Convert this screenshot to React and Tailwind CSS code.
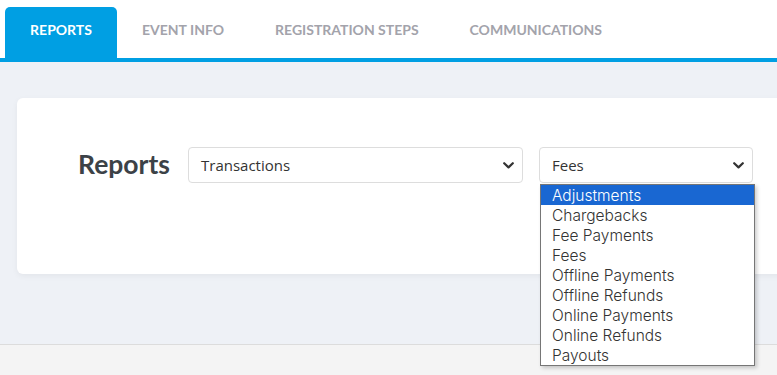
import React from "react";

const Chevron = ({ className = "" }) => (
  <svg className={className} width="11" height="7" viewBox="0 0 11 7" fill="none">
    <path d="M1.2 1.2 L5.5 5.4 L9.8 1.2" stroke="#333" strokeWidth="2.2" strokeLinecap="round" strokeLinejoin="round" />
  </svg>
);

const items = [
  "Adjustments",
  "Chargebacks",
  "Fee Payments",
  "Fees",
  "Offline Payments",
  "Offline Refunds",
  "Online Payments",
  "Online Refunds",
  "Payouts",
];

export default function App() {
  return (
    <div className="w-[777px] h-[375px] overflow-hidden bg-[#f4f4f4] font-['Lato',sans-serif]">
      {/* Tabs */}
      <div className="h-[62px] bg-white border-b-4 border-[#009fe3] flex items-end pl-[5px]">
        <div className="h-[51px] w-[112px] pb-[7px] bg-[#009fe3] rounded-t-[5px] flex items-center justify-center text-white font-bold text-[14px]">
          REPORTS
        </div>
        <div className="h-[51px] pb-[7px] flex items-center gap-[51px] pl-[25px] text-[#a3a3ab] font-bold text-[14px]">
          <span>EVENT INFO</span>
          <span>REGISTRATION STEPS</span>
          <span>COMMUNICATIONS</span>
        </div>
      </div>
      {/* Body */}
      <div className="h-[283px] bg-[#eef1f6] border-b border-[#dcdcdc] pt-[36px] pl-[17px]">
        <div className="relative w-[800px] h-[176px] bg-white rounded-[6px] shadow-[0_2px_6px_rgba(0,0,0,0.05)] pt-[49px] pl-[61px]">
          <div className="flex items-center">
            <h1 className="w-[110px] text-[26.5px] font-bold text-[#3c4247] leading-none font-['Lato',sans-serif] -mt-[2px]">
              Reports
            </h1>
            <div className="w-[335px] h-[36px] border border-[#dddddd] rounded-[4px] flex items-center justify-between pl-[12px] pr-[8px] text-[15px] text-[#333] font-['Open_Sans',sans-serif]">
              <span>Transactions</span>
              <Chevron />
            </div>
            <div className="relative ml-[16px] w-[214px] h-[36px] border border-[#dddddd] rounded-[4px] flex items-center justify-between pl-[12px] pr-[8px] text-[15px] text-[#333] font-['Open_Sans',sans-serif]">
              <span>Fees</span>
              <Chevron />
              <div className="absolute left-0 top-[36px] w-[215px] border border-[#767676] bg-white shadow-[2px_2px_4px_rgba(0,0,0,0.2)] z-10">
                {items.map((it, i) => (
                  <div
                    key={it}
                    className={
                      i === 0
                        ? "h-[20px] leading-[21px] pl-[11px] bg-[#1967d2] text-white text-[15.5px] font-['Inter',sans-serif] font-light"
                        : "h-[20px] leading-[21px] pl-[11px] text-[#333] text-[15.5px] font-['Inter',sans-serif] font-light"
                    }
                  >
                    {it}
                  </div>
                ))}
              </div>
            </div>
          </div>
        </div>
      </div>
    </div>
  );
}
